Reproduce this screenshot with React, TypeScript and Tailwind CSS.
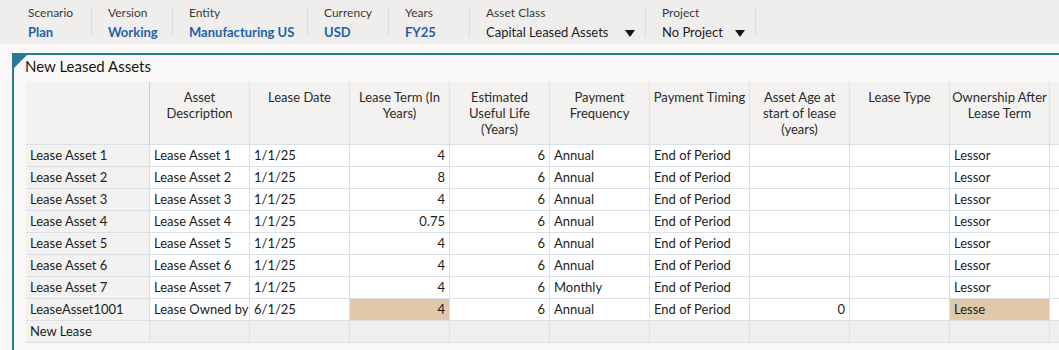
import React from 'react';

type Item = { label: string; value: string; width: string; dropdown?: boolean };

const povItems: Item[] = [
  { label: 'Scenario', value: 'Plan', width: 'w-[80px]' },
  { label: 'Version', value: 'Working', width: 'w-[81px]' },
  { label: 'Entity', value: 'Manufacturing US', width: 'w-[135px]' },
  { label: 'Currency', value: 'USD', width: 'w-[81px]' },
  { label: 'Years', value: 'FY25', width: 'w-[81px]' },
  { label: 'Asset Class', value: 'Capital Leased Assets', width: 'w-[176px]', dropdown: true },
  { label: 'Project', value: 'No Project', width: 'w-[110px]', dropdown: true },
];

const columns = [
  'Asset Description',
  'Lease Date',
  'Lease Term (In Years)',
  'Estimated Useful Life (Years)',
  'Payment Frequency',
  'Payment Timing',
  'Asset Age at start of lease (years)',
  'Lease Type',
  'Ownership After Lease Term',
  '',
];

// column index -> right aligned
const numeric = [false, false, true, true, false, false, true, false, false, false];

type Row = { name: string; cells: string[]; highlight?: number[] };

const rows: Row[] = [
  { name: 'Lease Asset 1', cells: ['Lease Asset 1', '1/1/25', '4', '6', 'Annual', 'End of Period', '', '', 'Lessor', ''] },
  { name: 'Lease Asset 2', cells: ['Lease Asset 2', '1/1/25', '8', '6', 'Annual', 'End of Period', '', '', 'Lessor', ''] },
  { name: 'Lease Asset 3', cells: ['Lease Asset 3', '1/1/25', '4', '6', 'Annual', 'End of Period', '', '', 'Lessor', ''] },
  { name: 'Lease Asset 4', cells: ['Lease Asset 4', '1/1/25', '0.75', '6', 'Annual', 'End of Period', '', '', 'Lessor', ''] },
  { name: 'Lease Asset 5', cells: ['Lease Asset 5', '1/1/25', '4', '6', 'Annual', 'End of Period', '', '', 'Lessor', ''] },
  { name: 'Lease Asset 6', cells: ['Lease Asset 6', '1/1/25', '4', '6', 'Annual', 'End of Period', '', '', 'Lessor', ''] },
  { name: 'Lease Asset 7', cells: ['Lease Asset 7', '1/1/25', '4', '6', 'Monthly', 'End of Period', '', '', 'Lessor', ''] },
  {
    name: 'LeaseAsset1001',
    cells: ['Lease Owned by', '6/1/25', '4', '6', 'Annual', 'End of Period', '0', '', 'Lesse', ''],
    highlight: [2, 8],
  },
];

const colWidth = (i: number) => (i === 9 ? 'w-[60px]' : 'w-[100px]');

const PovBar = () => (
  <div className="flex h-[44px] bg-[#efeeec] pl-[12px]">
    {povItems.map((it) => (
      <div key={it.label} className={`${it.width} flex shrink-0`}>
        <div className="flex-1 pl-[16px] pt-[5px]">
          <div className="text-[12px] leading-[16px] text-[#3a3a3a]">{it.label}</div>
          {it.dropdown ? (
            <div className="mt-[2px] flex items-center text-[13px] leading-[18px] text-[#1c1c1c]">
              <span className="whitespace-nowrap">{it.value}</span>
              <span className="ml-auto mr-[10px] mt-[3px] h-0 w-0 border-x-[5px] border-t-[7px] border-x-transparent border-t-[#161513]" />
            </div>
          ) : (
            <div className="mt-[2px] whitespace-nowrap text-[13px] font-bold leading-[18px] text-[#1f63a6]">{it.value}</div>
          )}
        </div>
        <div className="my-[7px] w-px bg-[#dcdbd8]" />
      </div>
    ))}
  </div>
);

const Grid = () => (
  <div className="ml-[12px] flex flex-col text-[13px] text-[#1c1c1c]">
    <div className="flex h-[63px] bg-[#f3f2f0] border-b border-[#d9e0e8]">
      <div className="w-[124px] shrink-0 border-r border-[#c9c9c9]" />
      {columns.map((c, i) => (
        <div
          key={i}
          className={`${colWidth(i)} shrink-0 border-r border-[#dde2e8] px-[2px] pt-[7px] text-center leading-[16px] text-[#2b2b2b]`}
        >
          {c}
        </div>
      ))}
    </div>
    {rows.map((r) => (
      <div key={r.name} className="flex h-[22px]">
        <div className="w-[124px] shrink-0 border-b border-r border-[#d9e0e8] bg-[#f3f2f0] pl-[4px] leading-[21px] whitespace-nowrap">
          {r.name}
        </div>
        {r.cells.map((v, i) => (
          <div
            key={i}
            className={`${colWidth(i)} shrink-0 overflow-hidden whitespace-nowrap border-b border-r border-[#d9e0e8] leading-[21px] ${
              numeric[i] ? 'pr-[4px] text-right' : 'pl-[4px]'
            } ${r.highlight?.includes(i) ? 'bg-[#e0c9a9]' : 'bg-white'}`}
          >
            {v}
          </div>
        ))}
      </div>
    ))}
    <div className="flex h-[22px]">
      <div className="w-[124px] shrink-0 border-b border-r border-[#d9e0e8] bg-[#f3f2f0] pl-[4px] leading-[21px]">New Lease</div>
      {columns.map((_, i) => (
        <div key={i} className={`${colWidth(i)} shrink-0 border-b border-r border-[#d9e0e8] bg-[#f0efed]`} />
      ))}
    </div>
  </div>
);

export default function App() {
  return (
    <div className="h-[350px] w-[1059px] overflow-hidden bg-[#f9f8f6] font-['Lato',sans-serif]">
      <PovBar />
      <div className="relative ml-[12px] mt-[9px] h-[300px] border-l-2 border-t-2 border-[#26799b]">
        <span className="absolute left-0 top-0 h-0 w-0 border-r-[13px] border-t-[13px] border-r-transparent border-t-[#26799b]" />
        <div className="h-[27px] pl-[11px] text-[15px] leading-[22px] text-[#161513]">New Leased Assets</div>
        <Grid />
      </div>
    </div>
  );
}
